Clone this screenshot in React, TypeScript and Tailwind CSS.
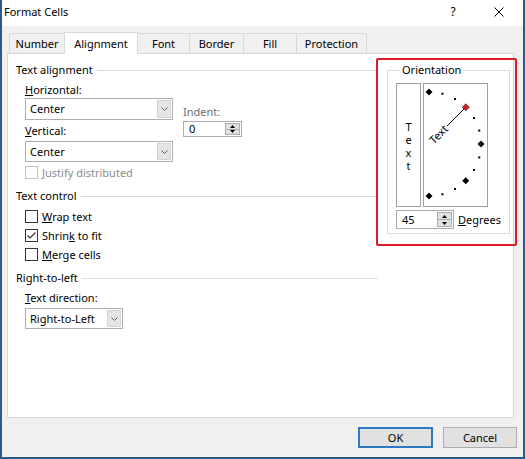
import React from 'react';

const base = "font-['Noto_Sans',sans-serif] text-[11px] leading-[16px] text-black";

const Chevron = () => (
  <svg width="7" height="4" viewBox="0 0 7 4">
    <path d="M0.5 0.5 L3.5 3.5 L6.5 0.5" fill="none" stroke="#606060" strokeWidth="1" />
  </svg>
);

const Combo = ({ value, className }: { value: string; className: string }) => (
  <div className={`flex items-stretch border border-[#adadad] bg-white ${className}`}>
    <div className="flex-1 pl-[4px] flex items-center">{value}</div>
    <div className="w-[14px] my-px mr-px bg-[#e5e5e5] border border-[#d4d4d4] flex items-center justify-center">
      <Chevron />
    </div>
  </div>
);

const Spin = ({ value, className }: { value: string; className: string }) => (
  <div className={`flex border border-[#abadb3] bg-white ${className}`}>
    <div className="flex-1 pl-[5px] flex items-center">{value}</div>
    <div className="w-[15px] my-px mr-px flex flex-col border border-[#adadad] bg-[#e1e1e1]">
      <div className="flex-1 flex items-center justify-center border-b border-[#adadad]">
        <svg width="5" height="3" viewBox="0 0 5 3"><path d="M2.5 0 L5 3 L0 3Z" fill="#000" /></svg>
      </div>
      <div className="flex-1 flex items-center justify-center">
        <svg width="5" height="3" viewBox="0 0 5 3"><path d="M0 0 L5 0 L2.5 3Z" fill="#000" /></svg>
      </div>
    </div>
  </div>
);

const Check = ({ checked, disabled, children, className }: { checked?: boolean; disabled?: boolean; children: React.ReactNode; className: string }) => (
  <div className={`flex items-center h-[13px] pl-[9px] ${className}`}>
    <div className={`w-[13px] h-[13px] border bg-white flex items-center justify-center ${disabled ? 'border-[#c4c4c4]' : 'border-[#333333]'}`}>
      {checked && (
        <svg width="11" height="11" viewBox="0 0 11 11">
          <path d="M1.5 5.5 L4 8 L9.5 2.5" fill="none" stroke="#333333" strokeWidth="1.2" />
        </svg>
      )}
    </div>
    <span className={`ml-[4px] leading-[13px] ${disabled ? 'text-[#8d8d8d]' : ''}`}>{children}</span>
  </div>
);

const Header = ({ label, className }: { label: string; className: string }) => (
  <div className={`flex items-center h-[16px] ${className}`}>
    <span>{label}</span>
    <div className="flex-1 h-px bg-[#dcdcdc] ml-[4px]" />
  </div>
);

const Dial = () => {
  const cx = 5, cy = 60, r = 52;
  const marks = [];
  for (let a = 90; a >= -90; a -= 15) {
    const rad = (a * Math.PI) / 180;
    marks.push({ a, x: cx + r * Math.cos(rad), y: cy - r * Math.sin(rad) });
  }
  return (
    <svg width="63" height="122" viewBox="0 0 63 122">
      {marks.map(m =>
        m.a % 45 === 0 ? (
          <polygon
            key={m.a}
            points={`${m.x},${m.y - 3.5} ${m.x + 3.5},${m.y} ${m.x},${m.y + 3.5} ${m.x - 3.5},${m.y}`}
            fill={m.a === 45 ? '#c8202a' : '#000'}
            stroke={m.a === 45 ? '#6b0000' : 'none'}
            strokeWidth="0.6"
          />
        ) : (
          <rect key={m.a} x={m.x - 1} y={m.y - 1} width="2" height="2" fill="#000" />
        )
      )}
      <line x1={cx + 18} y1={cy - 18} x2={cx + 35} y2={cy - 35} stroke="#000" strokeWidth="1" />
      <text
        x={cx + 3}
        y={cy + 4}
        fontSize="11"
        fontFamily="Noto Sans, sans-serif"
        transform={`rotate(-45 ${cx} ${cy})`}
      >
        Text
      </text>
    </svg>
  );
};

const tabs = [
  { name: 'Number', w: 'w-[56px]' },
  { name: 'Alignment', w: 'w-[74px]' },
  { name: 'Font', w: 'w-[53px]' },
  { name: 'Border', w: 'w-[55px]' },
  { name: 'Fill', w: 'w-[54px]' },
  { name: 'Protection', w: 'w-[71px]' },
];

export default function App() {
  return (
    <div className={`${base} w-[525px] h-[459px] flex flex-col bg-[#f0f0f0] border-x-2 border-b-2 border-[#2a5a88]`}>
      {/* title bar */}
      <div className="h-[26px] bg-white flex items-center pb-[2px] pl-[2px] pr-px">
        <span>Format Cells</span>
        <div className="ml-auto w-[46px] flex justify-center text-[12px]">?</div>
        <div className="w-[46px] flex justify-center">
          <svg width="10" height="10" viewBox="0 0 10 10">
            <path d="M0.5 0.5 L9.5 9.5 M9.5 0.5 L0.5 9.5" stroke="#000" strokeWidth="1" />
          </svg>
        </div>
      </div>

      <div className="pl-[5px]">
        {/* tabs */}
        <div className="flex items-end h-[21px] mt-[6px] pl-[2px]">
          {tabs.map((t, i) =>
            t.name === 'Alignment' ? (
              <div key={t.name} className={`${t.w} h-[22px] -mb-px -ml-px relative z-10 bg-white border-x border-t border-[#d9d9d9] flex items-center justify-center`}>
                {t.name}
              </div>
            ) : (
              <div key={t.name} className={`${t.w} h-[20px] ${i > 0 ? '-ml-px' : ''} bg-[#f0f0f0] border-x border-t border-[#d9d9d9] flex items-center justify-center pt-px`}>
                {t.name}
              </div>
            )
          )}
        </div>

        {/* panel */}
        <div className="relative w-[507px] h-[365px] bg-white border border-[#d9d9d9] flex items-start pt-[8px] pl-[8px]">
          <div className="w-[362px] flex flex-col">
            <Header label="Text alignment" className="" />
            <div className="flex mt-[4px]">
              <div className="flex flex-col pl-[9px]">
                <div className="h-[16px]"><u>H</u>orizontal:</div>
                <Combo value="Center" className="w-[148px] h-[22px]" />
                <div className="h-[16px] mt-[3px]"><u>V</u>ertical:</div>
                <Combo value="Center" className="w-[148px] h-[21px] mt-[2px]" />
              </div>
              <div className="flex flex-col ml-[10px] mt-[22px]">
                <div className="h-[16px] text-[#6d6d6d]">Indent:</div>
                <Spin value="0" className="w-[59px] h-[16px] mt-[1px]" />
              </div>
            </div>
            <Check disabled className="mt-[4px]">Justify distributed</Check>

            <Header label="Text control" className="mt-[9px]" />
            <Check className="mt-[6px]"><u>W</u>rap text</Check>
            <Check checked className="mt-[6px]">Shrin<u>k</u> to fit</Check>
            <Check className="mt-[6px]"><u>M</u>erge cells</Check>

            <Header label="Right-to-left" className="mt-[9px]" />
            <div className="h-[16px] mt-[4px] pl-[9px]"><u>T</u>ext direction:</div>
            <div className="pl-[9px] mt-[2px]">
              <Combo value="Right-to-Left" className="w-[98px] h-[21px]" />
            </div>
          </div>

          <fieldset className="ml-[9px] w-[122px] border border-[#dcdcdc] px-[8px] pb-[4px]">
            <legend className="ml-[4px] px-[2px] leading-[16px]">Orientation</legend>
            <div className="flex gap-[2px] mt-[5px]">
              <div className="w-[25px] h-[124px] border border-[#a0a0a0] flex flex-col items-center justify-center leading-[13px] pt-px">
                <span>T</span>
                <span>e</span>
                <span>x</span>
                <span>t</span>
              </div>
              <div className="w-[65px] h-[124px] border border-[#a0a0a0]">
                <Dial />
              </div>
            </div>
            <div className="flex items-center mt-[3px]">
              <Spin value="45" className="w-[58px] h-[19px]" />
              <span className="ml-[4px]"><u>D</u>egrees</span>
            </div>
          </fieldset>

          {/* highlight annotation */}
          <div className="absolute left-[368px] top-[4px] w-[141px] h-[188px] border-2 border-[#dc1c24] rounded-[2px]" />
        </div>

        {/* buttons */}
        <div className="flex justify-end gap-[10px] mt-[9px] pr-[6px]">
          <div className="w-[75px] h-[21px] border-2 border-[#2f78c4] bg-[#e1e1e1] flex items-center justify-center">OK</div>
          <div className="w-[74px] h-[21px] border border-[#adadad] bg-[#e1e1e1] flex items-center justify-center">Cancel</div>
        </div>
      </div>
    </div>
  );
}
